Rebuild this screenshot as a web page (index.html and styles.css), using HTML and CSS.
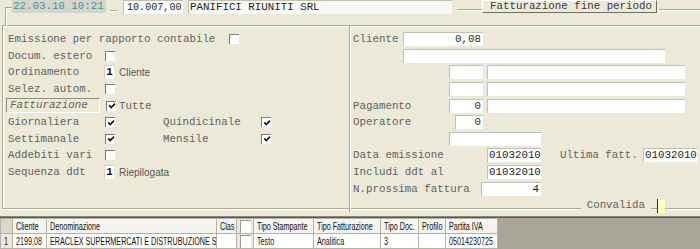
FILE: index.html
```html
<!DOCTYPE html>
<html>
<head>
<meta charset="utf-8">
<link rel="stylesheet" href="styles.css">
</head>
<body>
<div class="top">
  <div class="corner"></div>
  <div class="date">22.03.10 10:21</div>
  <div class="seg s1"></div>
  <div class="fld val">10.007,00</div>
  <div class="fld name">PANIFICI RIUNITI SRL</div>
  <div class="seg s2"></div>
  <div class="btn">Fatturazione fine periodo</div>
  <div class="seg s3"></div>
</div>
<div class="panels">
  <div class="left">
    <div class="row"><span class="lbl wide">Emissione per rapporto contabile</span><span class="cb"></span></div>
    <div class="row"><span class="lbl">Docum. estero</span><span class="cb"></span></div>
    <div class="row"><span class="lbl">Ordinamento</span><span class="num">1</span><span class="sans">Cliente</span></div>
    <div class="row"><span class="lbl">Selez. autom.</span><span class="cb"></span></div>
    <div class="row"><span class="fatt">Fatturazione</span><span class="cb"><svg viewBox="0 0 8 8" width="8" height="8"><polyline points="1.2,3.4 3.2,5.6 7,1.6" /></svg></span><span class="txt">Tutte</span></div>
    <div class="row"><span class="lbl">Giornaliera</span><span class="cb"><svg viewBox="0 0 8 8" width="8" height="8"><polyline points="1.2,3.4 3.2,5.6 7,1.6" /></svg></span><span class="lbl2">Quindicinale</span><span class="cb"><svg viewBox="0 0 8 8" width="8" height="8"><polyline points="1.2,3.4 3.2,5.6 7,1.6" /></svg></span></div>
    <div class="row"><span class="lbl">Settimanale</span><span class="cb"><svg viewBox="0 0 8 8" width="8" height="8"><polyline points="1.2,3.4 3.2,5.6 7,1.6" /></svg></span><span class="lbl2">Mensile</span><span class="cb"><svg viewBox="0 0 8 8" width="8" height="8"><polyline points="1.2,3.4 3.2,5.6 7,1.6" /></svg></span></div>
    <div class="row"><span class="lbl">Addebiti vari</span><span class="cb"></span></div>
    <div class="row"><span class="lbl">Sequenza ddt</span><span class="num">1</span><span class="sans">Riepilogata</span></div>
  </div>
  <div class="right">
    <div class="row"><span class="rl w50">Cliente</span><span class="fld f80 r">0,08</span></div>
    <div class="row"><span class="fld f262 m50"></span></div>
    <div class="row"><span class="fld f34 m96"></span><span class="fld f198 g4"></span></div>
    <div class="row"><span class="fld f34 m96"></span><span class="fld f198 g4"></span></div>
    <div class="row"><span class="rl w96">Pagamento</span><span class="fld f34 r">0</span><span class="fld f198 g4"></span></div>
    <div class="row"><span class="rl w102">Operatore</span><span class="fld f28 r">0</span></div>
    <div class="row"><span class="fld f92 m96"></span></div>
    <div class="row"><span class="rl w134">Data emissione</span><span class="fld f54">01032010</span><span class="rl w83 g19">Ultima fatt.</span><span class="fld f54">01032010</span></div>
    <div class="row"><span class="rl w134">Includi ddt al</span><span class="fld f54">01032010</span></div>
    <div class="row"><span class="rl w128">N.prossima fattura</span><span class="fld f60 r">4</span></div>
    <div class="conv"><span class="legend">Convalida</span><span class="ybox"></span></div>
  </div>
</div>
<div class="grid">
  <table>
    <colgroup>
      <col class="c0"><col class="c1"><col class="c2"><col class="c3"><col class="c4"><col class="c5"><col class="c6"><col class="c7"><col class="c8"><col class="c9">
    </colgroup>
    <tr class="hd">
      <th class="rh"></th><th><span class="t">Cliente</span></th><th><span class="t">Denominazione</span></th><th><span class="t">Clas</span></th><th class="cbc"><span class="gbox"></span></th><th><span class="t">Tipo Stampante</span></th><th><span class="t">Tipo Fatturazione</span></th><th><span class="t">Tipo Doc.</span></th><th><span class="t">Profilo</span></th><th><span class="t">Partita IVA</span></th>
    </tr>
    <tr>
      <td class="rh"><span class="t">1</span></td><td><span class="t">2199,08</span></td><td><span class="t">ERACLEX SUPERMERCATI E DISTRUBUZIONE S</span></td><td></td><td class="cbc"><span class="gbox"></span></td><td><span class="t">Testo</span></td><td><span class="t">Analitica</span></td><td><span class="t">3</span></td><td></td><td><span class="t">05014230725</span></td>
    </tr>
  </table>
</div>
</body>
</html>
```
FILE: styles.css
```css
html, body {
  margin: 0;
  padding: 0;
}
body {
  background: #ECE9D8;
  width: 700px;
  height: 249px;
  overflow: hidden;
  font-family: "Liberation Mono", "Courier New", monospace;
  font-size: 10.8px;
  color: #626262;
}

/* top bar */
.top {
  display: flex;
  align-items: flex-start;
  height: 25px;
  padding-left: 5px;
}
.corner {
  width: 7px;
  height: 19px;
  margin-top: 7px;
  box-sizing: border-box;
  border-left: 1px solid #aca899;
  border-top: 1px solid #aca899;
  box-shadow: inset 1px 1px 0 #fff;
}
.date {
  width: 93px;
  height: 13px;
  padding-left: 1px;
  background: #D6D3CB;
  color: #349c9a;
  line-height: 13px;
}
.seg {
  height: 0;
  border-top: 1px solid #aca899;
  border-bottom: 1px solid #fff;
}
.s1 { width: 7px; margin: 10px 6px 0 4px; }
.s2 { width: 25px; margin: 9px 0 0 5px; }
.s3 { flex: 1; margin: 9px 0 0 2px; }
.fld {
  display: block;
  box-sizing: border-box;
  height: 14px;
  line-height: 13px;
  background: #fff;
  border-top: 1px solid #c2bfb3;
  border-left: 1px solid #c2bfb3;
  color: #1e1e1e;
  white-space: pre;
  overflow: hidden;
}
.val { width: 60px; padding-left: 3px; font-size: 10.1px; }
.name { width: 264px; margin-left: 5px; padding-left: 1px; background: #f8f8f6; }
.btn {
  box-sizing: border-box;
  width: 175px;
  height: 13px;
  line-height: 11px;
  padding-left: 7px;
  border: 1px solid;
  border-color: #fff #716f64 #716f64 #fff;
  color: #3a3a3a;
}

/* panels */
.panels {
  display: grid;
  grid-template-columns: 347px 1fr;
  height: 184px;
  box-sizing: border-box;
  margin-left: 2px;
  border-top: 1px solid #aca899;
  border-left: 1px solid #aca899;
  border-bottom: 1px solid #aca899;
  box-shadow: inset 1px 1px 0 #fff, 0 1px 0 #fff;
}
.left {
  border-right: 1px solid #aca899;
  box-shadow: 1px 0 0 #fff;
  padding: 5px 0 0 5px;
}
.right {
  padding: 5px 0 0 3px;
}
.row {
  display: flex;
  align-items: center;
  height: 16.6px;
  white-space: pre;
}
.lbl { width: 97px; flex: none; }
.lbl.wide { width: 221px; }
.lbl2 { width: 98px; margin-left: 48px; flex: none; }
.cb {
  box-sizing: border-box;
  width: 10px;
  height: 10px;
  flex: none;
  background: #fff;
  border-top: 1px solid #7b7b7b;
  border-left: 1px solid #7b7b7b;
  display: flex;
  align-items: center;
  justify-content: center;
}
.cb svg { display: block; }
.cb polyline {
  fill: none;
  stroke: #111;
  stroke-width: 1.6;
}
.num {
  box-sizing: border-box;
  width: 10px;
  height: 14px;
  margin-left: -1px;
  background: #fff;
  border-top: 1px solid #d2cfc4;
  border-left: 1px solid #d2cfc4;
  color: #111;
  line-height: 13px;
  text-align: center;
  font-weight: bold;
}
.sans {
  font-family: "Liberation Sans", Arial, sans-serif;
  font-size: 10px;
  color: #555;
  margin-left: 5px;
}
.fatt {
  box-sizing: border-box;
  width: 94px;
  height: 15px;
  line-height: 13px;
  margin-left: -2px;
  margin-right: 6px;
  padding-left: 3px;
  border: 1px solid;
  border-color: #8f8d82 #fff #fff #8f8d82;
  font-style: italic;
  flex: none;
}
.txt { margin-left: 3px; }

.rl { flex: none; }
.w50 { width: 50px; }
.w83 { width: 83px; }
.w96 { width: 96px; }
.w102 { width: 102px; }
.w128 { width: 128px; }
.w134 { width: 134px; }
.g4 { margin-left: 4px; }
.g19 { margin-left: 19px; }
.m50 { margin-left: 50px; }
.m96 { margin-left: 96px; }
.f28 { width: 28px; }
.f34 { width: 34px; }
.f54 { width: 54px; padding-left: 1px; }
.f60 { width: 60px; }
.f80 { width: 80px; }
.f92 { width: 92px; }
.f198 { width: 198px; }
.f262 { width: 262px; }
.r { text-align: right; padding-right: 2px; }

.conv {
  display: flex;
  justify-content: flex-end;
  align-items: center;
  height: 14px;
  margin-top: 2px;
  margin-right: 35px;
}
.legend {
  background: #ECE9D8;
  padding: 0 6px;
  line-height: 12px;
  height: 12px;
  margin-right: 6px;
  margin-top: -2px;
}
.ybox {
  box-sizing: border-box;
  width: 8px;
  height: 14px;
  background: #FFFFC4;
  border-left: 1px solid #2b2b2b;
}

/* grid */
.grid {
  margin-top: 7px;
  height: 40px;
  background: #A9A699;
  border-top: 1px solid #8a877c;
  box-shadow: inset 0 1px 0 #5a5850;
}
.grid table {
  border-collapse: collapse;
  table-layout: fixed;
  width: 497px;
  margin-top: 1px;
  font-family: "Liberation Sans", Arial, sans-serif;
  font-size: 10.5px;
  color: #111;
}
.c0 { width: 12px; }
.c1 { width: 34px; }
.c2 { width: 170px; }
.c3 { width: 20px; }
.c4 { width: 17px; }
.c5 { width: 60px; }
.c6 { width: 67px; }
.c7 { width: 38px; }
.c8 { width: 27px; }
.c9 { width: 52px; }
.grid th, .grid td {
  height: 15px;
  box-sizing: border-box;
  padding: 0 0 0 3px;
  border: 1px solid #b5b2a6;
  text-align: left;
  font-weight: normal;
  white-space: nowrap;
  overflow: hidden;
  line-height: 13px;
}
.t {
  display: inline-block;
  transform: scaleX(0.685);
  transform-origin: 0 50%;
}
.grid th { background: #F5F4EE; }
.grid td { background: #fff; }
.grid .rh { background: #ECE9D8; padding-left: 3px; }
.grid th.rh { background: #DAD7CC; }
.grid .cbc { background: #ECE9D8; padding: 0 0 0 3px; }
.gbox {
  display: block;
  box-sizing: border-box;
  width: 11px;
  height: 13px;
  background: #fff;
  border-left: 1px solid #9c998e;
  border-top: 1px solid #9c998e;
}
```
